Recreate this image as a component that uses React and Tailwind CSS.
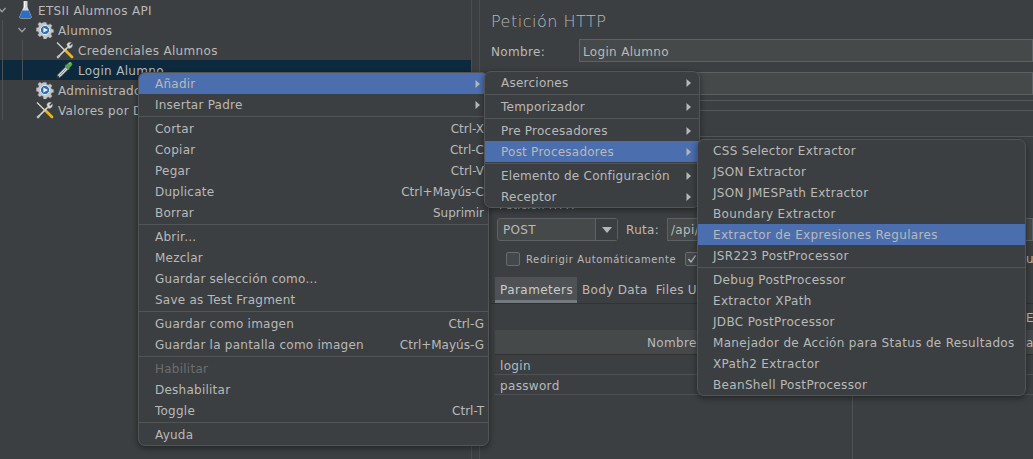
import React from "react";

const Gear = () => (
  <svg width="18" height="18" viewBox="0 0 18 18" className="shrink-0">
    <path d="M7.4 1h3.2l.4 2.2 1.6.7 1.9-1.2 2.2 2.2-1.2 1.9.7 1.6 2.1.4v3.2l-2.1.4-.7 1.6 1.2 1.9-2.2 2.2-1.9-1.2-1.6.7-.4 2.1H7.4L7 16.3l-1.6-.7-1.9 1.2-2.2-2.2 1.2-1.9-.7-1.6-2.1-.4V7l2.1-.4.7-1.6-1.2-1.9 2.2-2.2 1.9 1.2L7 1.4z" transform="translate(.5 .2) scale(.94)" fill="#c4c6c8" stroke="#6b6f72" strokeWidth="0.5" />
    <circle cx="9" cy="9" r="4.6" fill="#2f6fb5" stroke="#e6e8ea" strokeWidth="1" />
    <path d="M7.4 6.6 12 9l-4.6 2.4z" fill="#e8f0f8" />
  </svg>
);

const Wrench = () => (
  <svg width="18" height="18" viewBox="0 0 18 18" className="shrink-0">
    <path d="M1 1.5 9.5 10" stroke="#d8d8d8" strokeWidth="1.3" />
    <path d="M9 9l7 7" stroke="#e8b422" strokeWidth="2.8" strokeLinecap="round" />
    <path d="M2 16 12 6" stroke="#d2d4d6" strokeWidth="1.7" />
    <path d="M1.2 16.8 3.4 14.6" stroke="#b9bbbd" strokeWidth="2.4" />
    <path d="M10.8 3.6a3.4 3.4 0 0 1 4.6-2l-2.2 2.2.9 1.1 2.3-2a3.4 3.4 0 0 1-4.5 4.2z" fill="#d8dadc" stroke="#8f9193" strokeWidth=".4" />
  </svg>
);

const Dropper = () => (
  <svg width="18" height="18" viewBox="0 0 18 18" className="shrink-0">
    <path d="M.8 17.2 2 13.6 9.6 6l2.4 2.4-7.6 7.6z" fill="#d9dcdd" stroke="#5a5d5f" strokeWidth=".5" />
    <path d="M.8 17.2 2.2 15 3 15.8z" fill="#1e2022" stroke="#1e2022" strokeWidth=".8" />
    <path d="M3.4 14.6 9.8 8.2" stroke="#7f8385" strokeWidth="1" />
    <path d="M9 5.4 12.6 9l1.2-1.2-.6-.6 2.6-2.6a2.2 2.2 0 0 0-3.1-3.1l-2.6 2.6-.6-.6z" fill="#56a34e" />
    <path d="M13 3.2 14.6 1.8" stroke="#a5d895" strokeWidth="1" />
  </svg>
);

const Flask = () => (
  <svg width="13" height="20" viewBox="0 0 13 20" className="shrink-0">
    <path d="M4.5 1h4v6l4 9.6c.4 1.1-.2 1.9-1.3 1.9H1.8C.7 18.5.1 17.7.5 16.6l4-9.6z" fill="#d6dadd" />
    <path d="M3.2 10.5h6.6l2.4 6c.3.9-.1 1.5-1 1.5H1.8c-.9 0-1.3-.6-1-1.5z" fill="#2b6fc4" />
    <path d="M5 1.5h1v6H5z" fill="#ffffff" />
  </svg>
);

const Chevron = () => (
  <svg width="10" height="10" viewBox="0 0 10 10" className="mr-[12px] shrink-0">
    <path d="M1.5 3 5 6.8 8.5 3" fill="none" stroke="#9a9c9e" strokeWidth="1.4" />
  </svg>
);

function TreeRow({ indent, chevron, icon, label, selected }) {
  return (
    <div className={`flex h-5 items-center ${selected ? "bg-[#0d293e]" : ""} ${indent}`}>
      <span className="flex w-[18px] shrink-0 justify-center">{chevron && <Chevron />}</span>
      <span className="flex w-[16px] shrink-0 justify-center">{icon}</span>
      <span className="whitespace-nowrap pl-[5px] pt-px">{label}</span>
    </div>
  );
}

const Arrow = () => (
  <svg width="6" height="10" viewBox="0 0 6 10" className="shrink-0">
    <path d="M0.5 1 5 5 0.5 9z" fill="#b4b6b8" />
  </svg>
);

function Row({ label, shortcut, sub, active, disabled, pad }) {
  return (
    <div
      className={`flex h-[21px] items-center justify-between whitespace-nowrap ${pad} pr-[4px] ${
        active ? "bg-[#4b6eaf]" : ""
      } ${disabled ? "text-[#6b6d6f]" : ""}`}
    >
      <span>{label}</span>
      {shortcut && <span className="tracking-normal">{shortcut}</span>}
      {sub && (
        <span className="mr-[3px]">
          <Arrow />
        </span>
      )}
    </div>
  );
}

const Sep = () => (
  <div className="flex h-[3px] items-center">
    <div className="h-px w-full bg-[#515558]" />
  </div>
);

const main = [
  [{ l: "Añadir", sub: 1, active: 1 }, { l: "Insertar Padre", sub: 1 }],
  [
    { l: "Cortar", s: "Ctrl-X" },
    { l: "Copiar", s: "Ctrl-C" },
    { l: "Pegar", s: "Ctrl-V" },
    { l: "Duplicate", s: "Ctrl+Mayús-C" },
    { l: "Borrar", s: "Suprimir" },
  ],
  [{ l: "Abrir..." }, { l: "Mezclar" }, { l: "Guardar selección como..." }, { l: "Save as Test Fragment" }],
  [{ l: "Guardar como imagen", s: "Ctrl-G" }, { l: "Guardar la pantalla como imagen", s: "Ctrl+Mayús-G" }],
  [{ l: "Habilitar", dis: 1 }, { l: "Deshabilitar" }, { l: "Toggle", s: "Ctrl-T" }],
  [{ l: "Ayuda" }],
];
const sub1 = [
  [{ l: "Aserciones", sub: 1 }],
  [{ l: "Temporizador", sub: 1 }],
  [{ l: "Pre Procesadores", sub: 1 }, { l: "Post Procesadores", sub: 1, active: 1 }],
  [{ l: "Elemento de Configuración", sub: 1 }, { l: "Receptor", sub: 1 }],
];
const sub2 = [
  [
    { l: "CSS Selector Extractor" },
    { l: "JSON Extractor" },
    { l: "JSON JMESPath Extractor" },
    { l: "Boundary Extractor" },
    { l: "Extractor de Expresiones Regulares", active: 1 },
    { l: "JSR223 PostProcessor" },
  ],
  [
    { l: "Debug PostProcessor" },
    { l: "Extractor XPath" },
    { l: "JDBC PostProcessor" },
    { l: "Manejador de Acción para Status de Resultados" },
    { l: "XPath2 Extractor" },
    { l: "BeanShell PostProcessor" },
  ],
];

function Menu({ groups, box, pad }) {
  return (
    <div
      className={`absolute overflow-hidden rounded-[7px] border border-[#515558] bg-[#3c3f41] shadow-[0_2px_6px_rgba(0,0,0,0.45)] ${box}`}
    >
      {groups.map((g, i) => (
        <React.Fragment key={i}>
          {i > 0 && <Sep />}
          {g.map((r) => (
            <Row key={r.l} label={r.l} shortcut={r.s} sub={r.sub} active={r.active} disabled={r.dis} pad={pad} />
          ))}
        </React.Fragment>
      ))}
    </div>
  );
}

export default function App() {
  return (
    <div className="relative flex h-[459px] w-[1033px] overflow-hidden bg-[#3c3f41] font-['DejaVu_Sans',sans-serif] text-[12px] tracking-[0.33px] text-[#b9b9b9]">
      {/* tree */}
      <div className="relative w-[471px] shrink-0">
        <TreeRow indent="-ml-px" chevron icon={<Flask />} label="ETSII Alumnos API" />
        <TreeRow indent="pl-[19px]" chevron icon={<Gear />} label="Alumnos" />
        <TreeRow indent="pl-[39px]" icon={<Wrench />} label="Credenciales Alumnos" />
        <TreeRow indent="pl-[39px]" icon={<Dropper />} label="Login Alumno" selected />
        <TreeRow indent="pl-[19px]" icon={<Gear />} label="Administradores" />
        <TreeRow indent="pl-[19px]" icon={<Wrench />} label="Valores por Defecto" />
        <div className="absolute left-[2px] top-[20px] h-[100px] w-px bg-[#4e5254]" />
        <div className="absolute left-[22px] top-[40px] h-[40px] w-px bg-[#4e5254]" />
      </div>
      <div className="w-[9px] shrink-0 border-x border-[#4a4d4f]" />
      {/* right */}
      <div className="min-w-0 flex-1 pl-[11px]">
        <div className="flex h-[39px] items-end pb-[9px] text-[16px] font-light leading-none tracking-[0.5px]">Petición HTTP</div>
        <div className="flex h-[23px] items-center">
          <span className="w-[88px] shrink-0 pt-[2px]">Nombre:</span>
          <div className="flex h-full flex-1 items-center border border-[#5e6163] bg-[#45494a] pl-[3px] pt-[2px]">Login Alumno</div>
        </div>
        <div className="mt-[10px] flex h-[23px]">
          <div className="ml-[88px] flex-1 border border-[#5e6163] bg-[#45494a]" />
        </div>
        <div className="mt-[5px] h-[11px] border-y border-[#55585a]" />
        <div className="mt-[25px] h-px bg-[#55585a]" />
        <div className="pl-[8px] pt-[63px] text-[11px] leading-[12px]">Petición HTTP</div>
        <div className="mt-[6px] flex h-[23px] items-center pl-[6px]">
          <div className="flex h-full w-[121px] items-center rounded-[3px] border border-[#5e6163] bg-[#45494a]">
            <span className="flex-1 pl-[5px] pt-px">POST</span>
            <span className="flex h-full w-[22px] items-center justify-center border-l border-[#5e6163] bg-[#3c3f41]">
              <svg width="10" height="6" viewBox="0 0 10 6"><path d="M0 0h10L5 6z" fill="#b4b6b8" /></svg>
            </span>
          </div>
          <span className="ml-[8px] w-[41px] shrink-0 pt-px">Ruta:</span>
          <div className="flex h-full flex-1 items-center overflow-hidden whitespace-nowrap border border-[#5e6163] bg-[#45494a] pl-[3px] pt-px">/api/alumnos/login</div>
        </div>
        <div className="mt-[11px] flex h-[14px] items-center justify-between text-[10px] tracking-[0.62px]">
          <div className="flex items-center pl-[15px]">
            <span className="h-[14px] w-[14px] shrink-0 rounded-[2px] border border-[#6b6b6b] bg-[#43494a]" />
            <span className="ml-[6px] w-[148px] whitespace-nowrap pt-px">Redirigir Automáticamente</span>
            <span className="ml-[11px] flex h-[14px] w-[14px] shrink-0 items-center justify-center rounded-[2px] border border-[#6b6b6b] bg-[#43494a]">
              <svg width="10" height="10" viewBox="0 0 10 10"><path d="M1.5 5 4 8 8.5 1.5" fill="none" stroke="#bbbbbb" strokeWidth="1.3" /></svg>
            </span>
          </div>
          <span className="w-[7px] overflow-hidden text-[12px] tracking-[0.33px]">ulti</span>
        </div>
        <div className="mt-[11px] flex h-[27px] items-stretch border-b border-[#323232] pl-[4px]">
          <div className="flex w-[82px] items-center border-b-[3px] border-[#747a80] bg-[#4e5254] pl-[5px] pt-[2px] tracking-[0.45px] text-[#cccccc]">Parameters</div>
          <div className="flex items-center whitespace-nowrap pb-[1px] pl-[5px]">Body Data</div>
          <div className="flex items-center whitespace-nowrap pb-[1px] pl-[8px]">Files Upload</div>
        </div>
        <div className="flex h-[26px] items-center justify-end">
          <span className="w-[7px] overflow-hidden pt-[1px]">E</span>
        </div>
        <div className="ml-[4px] flex h-[25px] items-center justify-between border-b border-[#323232] bg-[#45494a] pl-[152px] pt-[2px]">
          <span>Nombre:</span>
          <span className="w-[7px] overflow-hidden">al</span>
        </div>
        <div className="ml-[4px] flex h-[20px] items-center border-b border-[#4e5254] pl-[5px] pt-[2px]">login</div>
        <div className="ml-[4px] flex h-[20px] items-center border-b border-[#4e5254] pl-[5px] pt-[2px]">password</div>
        <div className="ml-[361px] h-[64px] w-px bg-[#4e5254]" />
      </div>

      <Menu groups={main} pad="pl-[16px] tracking-[0.24px]" box="left-[138px] top-[72px] w-[351px]" />
      <Menu groups={sub1} pad="pl-[16px] tracking-[0.24px]" box="left-[484px] top-[71px] w-[216px]" />
      <Menu groups={sub2} pad="pl-[15px]" box="left-[697px] top-[139px] w-[329px]" />
    </div>
  );
}
